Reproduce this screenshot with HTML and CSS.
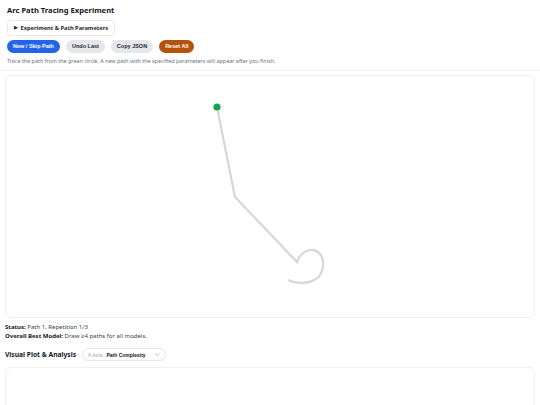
FILE: index.html
```html
<!DOCTYPE html>
<html>
<head>
<meta charset="utf-8">
<link rel="stylesheet" href="styles.css">
</head>
<body>
<div class="header">
  <h1 class="title">Arc Path Tracing Experiment</h1>
  <div class="details"><span class="tri">▶</span> Experiment &amp; Path Parameters</div>
  <div class="buttons">
    <button class="btn btn-blue">New / Skip Path</button>
    <button class="btn btn-gray">Undo Last</button>
    <button class="btn btn-gray">Copy JSON</button>
    <button class="btn btn-brown">Reset All</button>
  </div>
  <p class="hint">Trace the path from the green circle. A new path with the specified parameters will appear after you finish.</p>
</div>
<div class="main">
  <div class="canvas-card">
    <svg class="canvas" width="530" height="243" viewBox="5 75 530 243">
      <path d="M217 107 L235 197 L297 262 C300 252 311 247 318 252 C326 258 324 274 316 279 C308 284 296 284 288 280" fill="none" stroke="#d6d6da" stroke-width="2.2" stroke-linejoin="miter"/>
      <circle cx="217" cy="107" r="3.6" fill="#16a34a"/>
    </svg>
  </div>
  <div class="status">
    <div><b>Status:</b> Path 1, Repetition 1/3</div>
    <div><b>Overall Best Model:</b> Draw ≥4 paths for all models.</div>
  </div>
  <div class="plot-head">
    <h2 class="plot-title">Visual Plot &amp; Analysis</h2>
    <div class="select"><span class="sel-label">X-Axis:</span><span class="sel-value">Path Complexity</span><svg class="chev" width="5" height="3" viewBox="0 0 5 3"><path d="M0.5 0.5 L2.5 2.5 L4.5 0.5" fill="none" stroke="#9ca3af" stroke-width="0.7"/></svg></div>
  </div>
  <div class="plot-card"></div>
</div>
</body>
</html>
```
FILE: styles.css
```css
html, body { margin: 0; padding: 0; background: #fff; }
body { font-family: "Noto Sans", "Open Sans", sans-serif; font-size: 6px; color: #1f2937; width: 540px; height: 405px; overflow: hidden; }
.header { padding: 5px 7px 5px 7px; border-bottom: 1px solid #f0f0f0; }
.title { font-size: 7.6px; font-weight: 700; margin: 0; line-height: 10px; color: #111827; }
.details { width: fit-content; margin-top: 5px; border: 1px solid #e8e8ea; border-radius: 4px; padding: 2px 6px; font-size: 5.7px; font-weight: 700; line-height: 10px; }
.tri { font-size: 4.5px; position: relative; top: -1px; margin-right: 1px; }
.buttons { display: flex; gap: 6px; margin-top: 4px; }
.btn { border: none; border-radius: 999px; font-family: "Liberation Sans", Arial, sans-serif; font-size: 5.5px; font-weight: 700; height: 13px; padding: 0 6px; line-height: 13px; }
.btn-blue { background: #2563eb; color: #fff; }
.btn-gray { background: #e5e7eb; color: #1f2937; }
.btn-brown { background: #b45309; color: #fff; }
.hint { font-size: 5.4px; color: #6b7280; margin: 4px 0 0 0; line-height: 8px; }
.main { padding: 4px 5px 0 5px; }
.canvas-card { border: 1px solid #efefef; border-radius: 6px; height: 241px; overflow: hidden; }
.canvas { display: block; margin: -1px; }
.status { margin-top: 5px; font-size: 6px; line-height: 9px; color: #374151; }
.status b { color: #111827; }
.plot-head { display: flex; align-items: center; gap: 6px; margin-top: 7px; }
.plot-title { font-size: 6.7px; font-weight: 700; margin: 0; color: #111827; line-height: 9px; }
.select { display: flex; align-items: center; border: 1px solid #e5e7eb; border-radius: 999px; height: 11px; padding: 0 5px; font-size: 5px; gap: 3px; }
.sel-label { color: #9ca3af; }
.sel-value { font-family: "Liberation Sans", Arial, sans-serif; font-weight: 700; color: #111827; margin-right: 6px; }
.chev { display: block; }
.plot-card { margin-top: 6px; border: 1px solid #efefef; border-radius: 6px; height: 60px; }
```
